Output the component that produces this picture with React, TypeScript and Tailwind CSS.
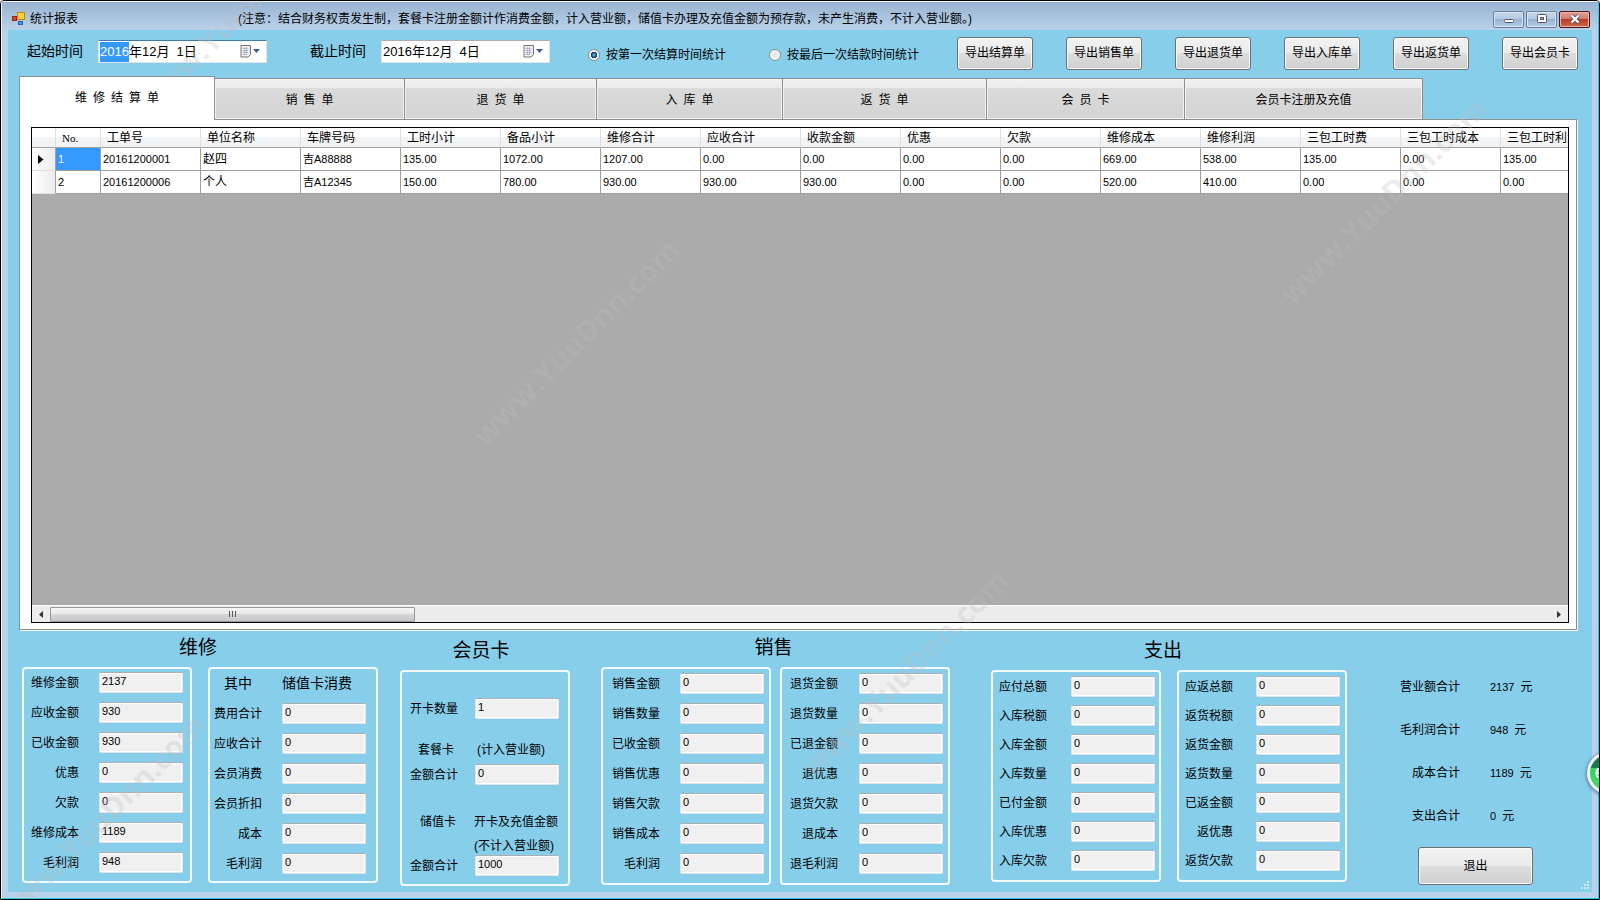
import { useEffect, useRef, useState } from 'react';

interface Field {
  label: string;
  value: string;
}

const tabs = [
  { name: '维\u2002修\u2002结\u2002算\u2002单', width: 'w-[196px]' },
  { name: '销\u2002售\u2002单', width: 'w-[190px]' },
  { name: '退\u2002货\u2002单', width: 'w-[192px]' },
  { name: '入\u2002库\u2002单', width: 'w-[186px]' },
  { name: '返\u2002货\u2002单', width: 'w-[204px]' },
  { name: '会\u2002员\u2002卡', width: 'w-[198px]' },
  { name: '会员卡注册及充值', width: 'w-[238px]' },
];

const exportButtons = ['导出结算单', '导出销售单', '导出退货单', '导出入库单', '导出返货单', '导出会员卡'];

const columns = [
  '工单号', '单位名称', '车牌号码', '工时小计', '备品小计', '维修合计', '应收合计', '收款金额',
  '优惠', '欠款', '维修成本', '维修利润', '三包工时费', '三包工时成本', '三包工时利润',
];

const rows = [
  ['1', '20161200001', '赵四', '吉A88888', '135.00', '1072.00', '1207.00', '0.00', '0.00', '0.00', '0.00', '669.00', '538.00', '135.00', '0.00', '135.00'],
  ['2', '20161200006', '个人', '吉A12345', '150.00', '780.00', '930.00', '930.00', '930.00', '0.00', '0.00', '520.00', '410.00', '0.00', '0.00', '0.00'],
];

const zeros = (labels: string[]): Field[] => labels.map(label => ({ label, value: '0' }));

const repairFields: Field[] = [
  { label: '维修金额', value: '2137' },
  { label: '应收金额', value: '930' },
  { label: '已收金额', value: '930' },
  { label: '优惠', value: '0' },
  { label: '欠款', value: '0' },
  { label: '维修成本', value: '1189' },
  { label: '毛利润', value: '948' },
];
const storedCardFields = zeros(['费用合计', '应收合计', '会员消费', '会员折扣', '成本', '毛利润']);
const saleFields = zeros(['销售金额', '销售数量', '已收金额', '销售优惠', '销售欠款', '销售成本', '毛利润']);
const saleReturnFields = zeros(['退货金额', '退货数量', '已退金额', '退优惠', '退货欠款', '退成本', '退毛利润']);
const stockFields = zeros(['应付总额', '入库税额', '入库金额', '入库数量', '已付金额', '入库优惠', '入库欠款']);
const stockReturnFields = zeros(['应返总额', '返货税额', '返货金额', '返货数量', '已返金额', '返优惠', '返货欠款']);

const totals: Field[] = [
  { label: '营业额合计', value: '2137' },
  { label: '毛利润合计', value: '948' },
  { label: '成本合计', value: '1189' },
  { label: '支出合计', value: '0' },
];

// lower left corner of each stamp
const watermarks = [
  'left-[156px] top-[81px]',
  'left-[491px] top-[413px]',
  'left-[1298px] top-[272px]',
  'left-[820px] top-[744px]',
  'left-[17px] top-[889px]',
];

const buttonLook =
  'rounded-[3px] border border-[#707070] bg-[linear-gradient(#f2f2f2,#ebebeb_48%,#dddddd_50%,#cfcfcf)] shadow-[inset_0_0_0_1px_#fcfcfc]';

function TitleBar() {
  return (
    <header className="flex h-[28px] items-center bg-linear-to-b from-[#99b4d1] to-[#b9d1ea] pl-[10px] pr-[8px] pt-1.5">
      <svg width="14" height="14" viewBox="0 0 14 14" className="shrink-0">
        <rect x="5.500" y="0.500" width="7" height="7" fill="#ffd23c" stroke="#b98a14" />
        <rect x="0.500" y="4.500" width="4" height="4" fill="#e0452c" stroke="#9c1f10" />
        <rect x="6.500" y="9.500" width="4" height="3" fill="#5b8fe0" stroke="#2c5cb0" />
      </svg>
      <h1 className="ml-[4px] w-[208px] shrink-0 text-[12px]">统计报表</h1>
      <p className="whitespace-nowrap text-[12px]">
        (注意：结合财务权责发生制，套餐卡注册金额计作消费金额，计入营业额，储值卡办理及充值金额为预存款，未产生消费，不计入营业额。)
      </p>
      <div className="ml-auto flex gap-[2px]">
        {['最小化', '还原', '关闭'].map((name, i) => (
          <button
            key={name}
            aria-label={name}
            className={
              i === 2
                ? 'flex h-[17px] w-[31px] items-center justify-center rounded-[2px] border border-[#50141c] bg-[linear-gradient(#e3a398,#d07a6c_48%,#b83a24_50%,#cf6a50)] shadow-[inset_0_0_0_1px_#e8b5aa]'
                : 'flex h-[17px] w-[31px] items-center justify-center rounded-[2px] border border-[#6b7f9c] bg-[linear-gradient(#c3d5ea,#b4cae3_48%,#98b3d2_50%,#b4cde8)] shadow-[inset_0_0_0_1px_#d5e3f3]'
            }
          >
            <svg width="12" height="10" viewBox="0 0 12 10">
              {i === 0 && <rect x="1.500" y="5.500" width="9" height="3" rx="1" fill="#fff" stroke="#535666" />}
              {i === 1 && (
                <>
                  <rect x="1.500" y="0.500" width="9" height="8" rx="1" fill="#fff" stroke="#535666" />
                  <rect x="4.500" y="3.500" width="3" height="2" fill="#9db7d5" stroke="#535666" />
                </>
              )}
              {i === 2 && (
                <>
                  <path d="M2.500 1.500l7 7M9.500 1.500l-7 7" stroke="#535666" strokeWidth="4" />
                  <path d="M2.500 1.500l7 7M9.500 1.500l-7 7" stroke="#fff" strokeWidth="2.300" />
                </>
              )}
            </svg>
          </button>
        ))}
      </div>
    </header>
  );
}

interface DatePickerProps {
  label: string;
  value: string;
  active?: boolean;
}

function DatePicker({ label, value, active }: DatePickerProps) {
  const inputRef = useRef<HTMLInputElement>(null);

  // the year part is the selected one when the window opens
  useEffect(() => {
    if (!active || !inputRef.current) return;
    inputRef.current.focus();
    inputRef.current.setSelectionRange(0, 4);
  }, [active]);

  return (
    <label className="flex items-center gap-[15px]">
      <span className="whitespace-nowrap text-[14px]">{label}</span>
      <span
        className={`flex h-[23px] w-[169px] items-center border border-[#e2e3ea] bg-white pl-px pr-[5px] ${
          active ? 'border-t-[#3d7bad]' : 'border-t-[#abadb3]'
        }`}
      >
        <input
          ref={inputRef}
          defaultValue={value}
          className="w-0 flex-1 whitespace-pre bg-transparent text-[13px] leading-[20px] outline-none selection:bg-[#3399ff] selection:text-white"
        />
        <svg width="21" height="13" viewBox="0 0 21 13">
          <path d="M1 .5h9.500v9l-2.500 2.500h-7z" fill="#f4f2f0" stroke="#7b6f6c" />
          <path d="M2.500 3.500h6M2.500 5.500h6M2.500 7.500h6M2.500 9.500h4M4.500 2v8M6.500 2v8" stroke="#a3b0c8" strokeWidth=".8" />
          <path d="M13 4h7l-3.500 4z" fill="#3f5f94" />
        </svg>
      </span>
    </label>
  );
}

function Toolbar() {
  const [basis, setBasis] = useState('first');
  const options = [
    { id: 'first', text: '按第一次结算时间统计' },
    { id: 'last', text: '按最后一次结款时间统计' },
  ];

  return (
    <div className="flex h-[46px] items-center pl-[19px] pr-[14px]">
      <div className="flex gap-[43px] pb-[3px]">
        <DatePicker label="起始时间" value="2016年12月  1日" active />
        <DatePicker label="截止时间" value="2016年12月  4日" />
      </div>
      <div className="ml-[38px] flex gap-[43px] pt-1">
        {options.map(o => (
          <label key={o.id} className="flex items-center gap-[6px] whitespace-nowrap text-[12px]">
            <input
              type="radio"
              name="basis"
              checked={basis === o.id}
              onChange={() => setBasis(o.id)}
              className="size-[12px] appearance-none rounded-full border border-[#8e8f8f] bg-[radial-gradient(circle,#e6e6e6,#fafafa)] checked:bg-[radial-gradient(circle,#5fd0f5_0,#14618f_28%,#123a55_42%,#f4f4f4_50%)]"
            />
            {o.text}
          </label>
        ))}
      </div>
      <div className="ml-auto flex gap-[33px]">
        {exportButtons.map(name => (
          <button key={name} className={`h-[33px] w-[76px] whitespace-nowrap text-[12px] ${buttonLook}`}>
            {name}
          </button>
        ))}
      </div>
    </div>
  );
}

function DataGrid() {
  const head =
    'h-[20px] border-b border-r border-b-[#a0a0a0] border-r-[#dedfe1] bg-[linear-gradient(#ffffff,#ffffff_45%,#f3f4f6_50%,#f1f2f4)] p-0 pl-[6px] text-left text-[12px] font-normal leading-[18px] whitespace-nowrap';
  const cell = 'h-[23px] border-b border-r border-[#a0a0a0] p-0 pl-[2px] text-[12px] leading-[18px] whitespace-nowrap';

  return (
    <div className="flex min-h-0 flex-1 flex-col overflow-hidden border border-black bg-[#ababab]">
      <div className="min-h-[380px] flex-1 overflow-hidden">
        <table className="w-[1569px] table-fixed border-separate border-spacing-0 bg-white">
          <colgroup>
            <col className="w-[24px]" />
            <col className="w-[45px]" />
            {columns.map(c => (
              <col key={c} className="w-[100px]" />
            ))}
          </colgroup>
          <thead>
            <tr>
              <th className={head} aria-label="当前行" />
              <th className={head}>
                <span className="font-['Liberation_Serif',serif] text-[11px]">No.</span>
              </th>
              {columns.map(c => (
                <th key={c} className={head}>{c}</th>
              ))}
            </tr>
          </thead>
          <tbody>
            {rows.map((row, r) => (
              <tr key={row[0]}>
                <td className="h-[23px] border-b border-r border-b-[#e0e0e0] border-r-[#a0a0a0] bg-linear-to-r from-white to-[#ececee] p-0 pl-[6px]">
                  {r === 0 && (
                    <svg width="6" height="9" viewBox="0 0 6 9">
                      <path d="M0 0l5.500 4.500L0 9z" />
                    </svg>
                  )}
                </td>
                {row.map((value, c) => (
                  <td key={c} className={r === 0 && c === 0 ? `${cell} bg-[#3399ff] text-white` : cell}>
                    <span className={c === 2 ? '' : 'text-[11px]'}>{value}</span>
                  </td>
                ))}
              </tr>
            ))}
          </tbody>
        </table>
      </div>
      <div className="flex h-[17px] shrink-0 items-center border-t border-white bg-[#ececec] pr-[5px]">
        <button aria-label="向左滚动" className="flex h-full w-[18px] items-center justify-center">
          <svg width="4" height="7" viewBox="0 0 4 7"><path d="M4 0v7L0 3.500z" fill="#333" /></svg>
        </button>
        <div className="flex h-[15px] w-[365px] items-center justify-center gap-[2px] rounded-[1px] border border-[#979797] bg-[linear-gradient(#f5f5f5,#e9e9eb_45%,#d5d6d9_50%,#c6c7ca)]">
          <i className="h-[6px] w-px bg-[#555]" />
          <i className="h-[6px] w-px bg-[#555]" />
          <i className="h-[6px] w-px bg-[#555]" />
        </div>
        <button aria-label="向右滚动" className="ml-auto flex h-full w-[8px] items-center justify-center">
          <svg width="4" height="7" viewBox="0 0 4 7"><path d="M0 0v7l4-3.500z" fill="#333" /></svg>
        </button>
      </div>
    </div>
  );
}

function TabPanel() {
  const [current, setCurrent] = useState(0);

  return (
    <div className="flex flex-1 flex-col pl-[11px] pr-[15px]">
      <div role="tablist" className="flex h-[43px] items-end">
        {tabs.map((tab, i) => (
          <button
            key={tab.name}
            role="tab"
            aria-selected={i === current}
            onClick={() => setCurrent(i)}
            className={`shrink-0 border-[#8c8e94] text-[12px] ${tab.width} ${
              i === current
                ? 'z-10 -mb-px h-[44px] border border-b-0 bg-white pb-0.5'
                : 'h-[41px] border-r border-t bg-[linear-gradient(#f2f2f2,#ebebeb_22%,#dadada_24%,#d4d4d4)] pt-0.5 shadow-[inset_0_0_0_1px_#f3f3f3]'
            }`}
          >
            {tab.name}
          </button>
        ))}
      </div>
      <div className="flex flex-1 flex-col border border-[#8c8e94] bg-white pb-[6px] pl-[11px] pr-[7px] pt-[7px] shadow-[1px_1px_0_#fff]">
        <DataGrid />
      </div>
    </div>
  );
}

function ValueBox({ value }: { value: string }) {
  return (
    <input
      readOnly
      value={value}
      className="h-[21px] w-[84px] rounded-[2px] border border-[#e2e3ea] border-t-[#abadb3] bg-[#f0f0f0] pb-[3px] pl-[2px] text-[11px] leading-[16px] shadow-[inset_0_0_0_1px_#fff] outline-none"
    />
  );
}

function FieldRows({ fields }: { fields: Field[] }) {
  return fields.map(f => (
    <label key={f.label} className="flex items-center justify-between">
      <span className="w-[48px] whitespace-nowrap text-right text-[12px] leading-[20px]">{f.label}</span>
      <ValueBox value={f.value} />
    </label>
  ));
}

const box = 'flex w-[170px] flex-col rounded-[4px] border-2 border-[#f4f9fc]';

function MemberCardBox() {
  return (
    <div className={`${box} h-[216px] pl-[8px] pr-[9px] pt-[26px] text-[12px] leading-[18px]`}>
      <label className="flex items-center justify-between">
        开卡数量
        <ValueBox value="1" />
      </label>
      <div className="mt-5 flex h-[21px] items-center">
        <span className="w-[67px] pl-[8px]">套餐卡</span>
        <span className="whitespace-nowrap">(计入营业额)</span>
      </div>
      <label className="mt-1 flex items-center justify-between">
        金额合计
        <ValueBox value="0" />
      </label>
      <div className="mt-7 flex h-[18px] items-center">
        <span className="w-[64px] pl-[10px]">储值卡</span>
        <span className="whitespace-nowrap">开卡及充值金额</span>
      </div>
      <p className="mt-[6px] h-[18px] whitespace-nowrap pl-[64px]">(不计入营业额)</p>
      <label className="flex items-center justify-between">
        金额合计
        <ValueBox value="1000" />
      </label>
    </div>
  );
}

function Summary() {
  const title = 'flex h-[37px] items-center justify-center pb-0.5 text-[19px] leading-[24px]';

  return (
    <div className="flex items-start pb-[6px] pl-[14px] pr-[59px]">
      <section>
        <h2 className={`${title} pr-1`}>维修</h2>
        <div className="flex gap-[16px]">
          <div className={`${box} h-[216px] gap-[9px] pl-[7px] pr-[7px] pt-[3px]`}>
            <FieldRows fields={repairFields} />
          </div>
          <div className={`${box} h-[216px] gap-[9px] pl-[4px] pr-[10px] pt-[3px]`}>
            <div className="flex h-[22px] items-center text-[14px] leading-[20px]">
              <span className="w-[68px] pl-[10px]">其中</span>
              <span>储值卡消费</span>
            </div>
            <FieldRows fields={storedCardFields} />
          </div>
        </div>
      </section>
      <section className="ml-[22px] pt-[3px]">
        <h2 className={`${title} pr-2`}>会员卡</h2>
        <MemberCardBox />
      </section>
      <section className="ml-[31px]">
        <h2 className={`${title} pr-1`}>销售</h2>
        <div className="flex gap-[9px]">
          <div className={`${box} h-[218px] gap-[9px] pl-[9px] pr-[5px] pt-[4px]`}>
            <FieldRows fields={saleFields} />
          </div>
          <div className={`${box} h-[218px] gap-[9px] pl-[8px] pr-[5px] pt-[4px]`}>
            <FieldRows fields={saleReturnFields} />
          </div>
        </div>
      </section>
      <section className="ml-[41px] pt-[3px]">
        <h2 className={`${title} pr-3`}>支出</h2>
        <div className="flex gap-[16px]">
          <div className={`${box} h-[212px] gap-[8px] pl-[6px] pr-[4px] pt-[4px]`}>
            <FieldRows fields={stockFields} />
          </div>
          <div className={`${box} h-[212px] gap-[8px] pl-[6px] pr-[5px] pt-[4px]`}>
            <FieldRows fields={stockReturnFields} />
          </div>
        </div>
      </section>
      <section className="ml-auto flex flex-col pt-[47px] text-[12px] leading-[21px]">
        <dl className="grid grid-cols-[60px_43px] gap-x-[30px] gap-y-[22px]">
          {totals.map(t => (
            <div key={t.label} className="contents">
              <dt className="text-right">{t.label}</dt>
              <dd className="whitespace-nowrap">
                <span className="text-[11px]">{t.value}</span>{'\u2002'}元
              </dd>
            </div>
          ))}
        </dl>
        <button className={`mt-5 h-[38px] w-[115px] self-end text-[12px] ${buttonLook}`}>退出</button>
      </section>
    </div>
  );
}

export default function App() {
  return (
    <div className="relative flex min-h-screen flex-col overflow-hidden rounded-t-[4px] border border-black bg-[#b9d1ea] font-['Liberation_Sans','Noto_Sans_CJK_SC',sans-serif] text-black">
      <div className="flex flex-1 flex-col border-b border-l border-r border-t border-b-[#20cfe6] border-l-[#eef5fc] border-r-[#20cfe6] border-t-[#eef5fc]">
        <TitleBar />
        <main className="relative mx-[6px] mb-[6px] flex flex-1 flex-col bg-[#87ceeb]">
          <Toolbar />
          <TabPanel />
          <Summary />
          <svg width="9" height="9" viewBox="0 0 9 9" className="absolute bottom-[2px] right-[2px]">
            <path d="M6 0h2v2h-2zM3 3h2v2h-2zM6 3h2v2h-2zM0 6h2v2h-2zM3 6h2v2h-2zM6 6h2v2h-2z" fill="#d9e6ee" />
          </svg>
        </main>
      </div>

      {/* floating speed ball, docked half outside the right edge */}
      <div className="absolute -right-[30px] top-[751px] size-[42px] overflow-hidden rounded-full border-[3px] border-[#eef2f0] bg-[linear-gradient(#1c7a52,#1c7a52_36%,#3fd05c_37%,#4ad864)] shadow-[0_1px_4px_#456]">
        <span className="block pl-[5px] pt-[9px] text-[14px] font-bold leading-[18px] text-white">6</span>
      </div>

      <div aria-hidden className="pointer-events-none absolute inset-0 overflow-hidden">
        {watermarks.map(place => (
          <span
            key={place}
            className={`absolute origin-bottom-left -rotate-45 whitespace-nowrap font-['Open_Sans',sans-serif] text-[30px] font-bold leading-[40px] text-[rgba(190,190,190,0.28)] ${place}`}
          >
            www.YuuDnn.com
          </span>
        ))}
      </div>
    </div>
  );
}
